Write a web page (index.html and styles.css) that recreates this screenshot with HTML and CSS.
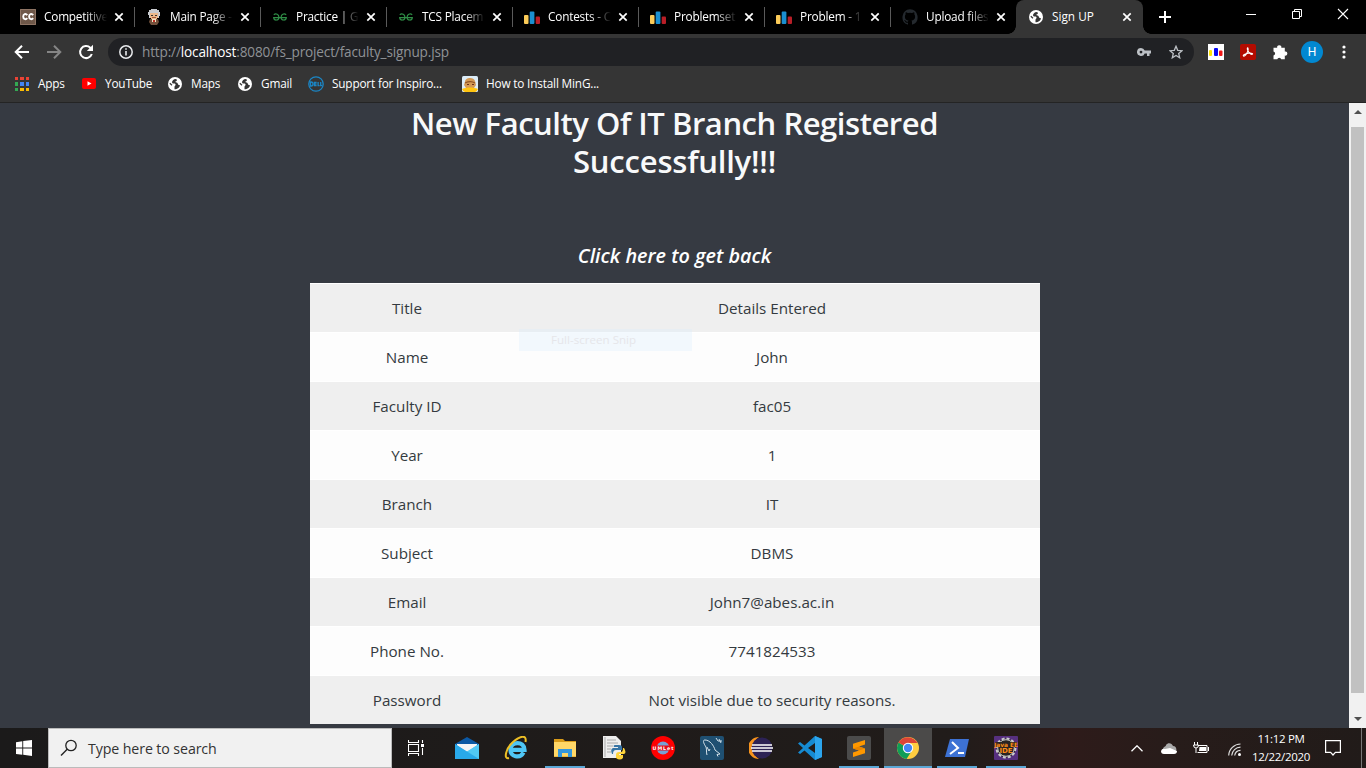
FILE: index.html
```html
<!DOCTYPE html>
<html lang="en">
<head>
<meta charset="utf-8">
<title>Sign UP</title>
<link rel="stylesheet" href="styles.css">
</head>
<body>
<svg class="defs" aria-hidden="true">
  <symbol id="globe" viewBox="0 0 14 14"><circle cx="7" cy="7" r="7" fill="#fff"/><path d="M7.500 2C5.800 2.200 4.300 3.400 4 5c0 1 .8 1.500 2 1.500 1.300 0 1.700.6 1.500 1.500-.2.800-1 .9-1 2v2.300c3 0 5.400-1.800 5.400-4.300-1 .4-1.700-.2-2-1C9.600 6 9 5.500 7.800 5.300c-.8-.2-.6-1 .3-1.100.8-.1.800-.8.700-1.800z" fill="#353535"/><path d="M1.800 6.200 4 8.200" stroke="#353535" stroke-width="1.200"/></symbol>
  <symbol id="close" viewBox="0 0 10 10"><path d="M1.3 1.3l7.4 7.4M8.7 1.3 1.3 8.7" stroke="#fff" stroke-width="1.7"/></symbol>
  <symbol id="bars" viewBox="0 0 16 16"><rect x="0" y="6" width="4.5" height="9" rx="1" fill="#fbcb58"/><rect x="5.7" y="2.500" width="4.7" height="12.5" rx="1" fill="#1a8fd0"/><rect x="11.7" y="7.500" width="4.3" height="7.5" rx="1" fill="#b81e27"/></symbol>
  <symbol id="gfg" viewBox="0 0 16 16"><path d="M1.800 5.700C4 4 6.900 5.500 6.900 8.200c0 3.800-5 3.600-5.200.4H14.300c-.2 3.200-5.200 3.400-5.200-.4 0-2.700 2.900-4.200 5.100-2.500" fill="none" stroke="#2f8d46" stroke-width="1.200"/></symbol>
</svg>

<header class="tabstrip">
  <div class="tab"><svg class="fav" viewBox="0 0 16 16"><rect width="16" height="16" fill="#6f5849"/><path d="M.5.5h15v15H.5z" fill="none" stroke="#8e7464"/><path d="M7.3 6.1C5.7 4 3.2 5 3.2 7.5s2.4 3.6 4.1 1.7M13.2 6.1C11.6 4 9.1 5 9.1 7.5s2.4 3.6 4.1 1.7" fill="none" stroke="#fff" stroke-width="1.9"/></svg><span class="name">Competitive</span><svg class="x"><use href="#close"/></svg></div>
  <div class="tab"><svg class="fav" viewBox="0 0 16 16"><path d="M2 3h1V1h2V0h6v1h2v2h1v4h-1v2H3V6H2z" fill="#c9cbcf"/><path d="M4 4h8v5h-1v1H5V9H4z" fill="#edb98b"/><path d="M5 6h2v1H5zM9 6h2v1H9z" fill="#333"/><path d="M6 8h4v1H6z" fill="#a65a3b"/><path d="M4 10h8l1 3-2 3H5l-2-3z" fill="#72513c"/><path d="M6 10h4v3H6z" fill="#f3e4c4"/><path d="M7 11h2v2H7z" fill="#c12c21"/></svg><span class="name">Main Page -</span><svg class="x"><use href="#close"/></svg></div>
  <div class="tab"><svg class="fav"><use href="#gfg"/></svg><span class="name">Practice | Ge</span><svg class="x"><use href="#close"/></svg></div>
  <div class="tab"><svg class="fav"><use href="#gfg"/></svg><span class="name">TCS Placem</span><svg class="x"><use href="#close"/></svg></div>
  <div class="tab"><svg class="fav"><use href="#bars"/></svg><span class="name">Contests - C</span><svg class="x"><use href="#close"/></svg></div>
  <div class="tab"><svg class="fav"><use href="#bars"/></svg><span class="name">Problemset</span><svg class="x"><use href="#close"/></svg></div>
  <div class="tab"><svg class="fav"><use href="#bars"/></svg><span class="name">Problem - 1</span><svg class="x"><use href="#close"/></svg></div>
  <div class="tab last"><svg class="fav" viewBox="0 0 16 16"><path d="M8 .2A8 8 0 0 0 5.5 15.600c.4.1.5-.2.5-.4v-1.500c-2.200.5-2.700-1-2.700-1-.4-.9-.9-1.200-.9-1.200-.7-.5.1-.5.1-.5.8.1 1.200.8 1.200.8.7 1.300 1.900.9 2.300.7.1-.5.3-.9.5-1.100-1.800-.2-3.600-.9-3.600-4 0-.9.3-1.600.8-2.100-.1-.2-.4-1 .1-2.100 0 0 .7-.2 2.200.8a7.500 7.500 0 0 1 4 0c1.500-1 2.200-.8 2.200-.8.4 1.100.2 1.900.1 2.100.5.5.8 1.200.8 2.100 0 3.100-1.900 3.800-3.700 4 .3.300.6.8.6 1.500v2.300c0 .2.100.5.600.4A8 8 0 0 0 8 .2z" fill="#24292e"/></svg><span class="name">Upload files</span><svg class="x"><use href="#close"/></svg></div>
  <div class="tab active"><svg class="fav globe"><use href="#globe"/></svg><span class="name">Sign UP</span><svg class="x"><use href="#close"/></svg></div>
  <svg class="newtab" viewBox="0 0 12 12"><path d="M6 0v12M0 6h12" stroke="#fff" stroke-width="2"/></svg>
  <div class="winbtns">
    <svg viewBox="0 0 12 12"><path d="M1 6.500h10" stroke="#fff"/></svg>
    <svg viewBox="0 0 12 12"><path d="M1.500 3.500h7v7h-7zM3.500 3V1.500h7v7H9" fill="none" stroke="#fff"/></svg>
    <svg viewBox="0 0 12 12"><path d="M1 1l10 10M11 1 1 11" stroke="#fff" stroke-width="1.100"/></svg>
  </div>
</header>

<nav class="toolbar">
  <svg class="nav" viewBox="0 0 16 16"><path d="M15 8H2M8 1.700 1.700 8 8 14.300" fill="none" stroke="#fff" stroke-width="2"/></svg>
  <svg class="nav" viewBox="0 0 16 16"><path d="M1 8h13M8 1.700 14.300 8 8 14.300" fill="none" stroke="#858585" stroke-width="2"/></svg>
  <svg class="nav" viewBox="0 0 16 16"><path d="M13.800 10A6 6 0 1 1 12.300 3.800L14 5.500" fill="none" stroke="#fff" stroke-width="2"/><path d="M15 .8v6.200H8.800z" fill="#fff"/></svg>
  <div class="omnibox">
    <svg class="info" viewBox="0 0 14 14"><circle cx="7" cy="7" r="6.200" fill="none" stroke="#e8eaed" stroke-width="1.500"/><path d="M7 6v4.500M7 3.200v1.600" stroke="#e8eaed" stroke-width="1.600"/></svg>
    <span class="url">http://<b>localhost</b>:8080/fs_project/faculty_signup.jsp</span>
    <svg class="key" viewBox="0 0 14 9"><path d="M4 0a4 4 0 1 0 3.700 5.500H10V8h2.500V5.500H14v-3H7.700A4 4 0 0 0 4 0zm0 2.700a1.400 1.400 0 1 1 0 2.800 1.400 1.400 0 0 1 0-2.800z" fill="#bdc1c6" fill-rule="evenodd"/></svg>
    <svg class="star" viewBox="0 0 14 14"><path d="M7 1.300l1.700 4 4.300.4-3.300 2.800 1 4.300L7 10.500l-3.700 2.300 1-4.300L1 5.700l4.300-.4z" fill="none" stroke="#bdc1c6" stroke-width="1.300"/></svg>
  </div>
  <div class="ext">
    <svg viewBox="0 0 16 16"><path d="M0 0h16v16H0z" fill="#fff"/><rect x="1" y="6" width="3" height="6" rx="1" fill="#ffe500"/><rect x="6" y="4" width="4" height="8" rx="1" fill="#0808f5"/><rect x="11" y="6.500" width="3.500" height="5.500" rx="1" fill="#f01818"/></svg>
    <svg viewBox="0 0 16 16"><rect width="16" height="16" rx="2" fill="#b30b00"/><path d="M3.500 12C2.500 11.200 5 9.800 8.500 9.300c3.500-.5 4.800.5 3.800 1-1.800.7-5.600-4-5-6.100.5-1.100 1.200.6.7 2.500-.7 2.400-3.200 6.100-4.500 5.300z" fill="none" stroke="#fff" stroke-width="1.100"/></svg>
    <svg viewBox="0 0 16 16"><path d="M1.500 3.800h3.700a2.100 2.100 0 1 1 4.100 0h3.500v3.700a2.100 2.100 0 1 1 0 4.100v3.600H9.200a2 2 0 0 0-3.900 0H1.500v-3.600a2.100 2.100 0 0 0 0-4.100z" fill="#fff"/></svg>
  </div>
  <span class="avatar">H</span>
  <svg class="more" viewBox="0 0 4 14"><circle cx="2" cy="2" r="1.600" fill="#fff"/><circle cx="2" cy="7" r="1.600" fill="#fff"/><circle cx="2" cy="12" r="1.600" fill="#fff"/></svg>
</nav>

<nav class="bookmarks">
  <span class="bm apps"><svg viewBox="0 0 14 14" width="14" height="14"><path d="M0 0h3v3H0zM5 0h4v3H5zM11 0h3v3h-3z" fill="#ea4335"/><path d="M0 5h3v4H0zM0 11h3v3H0z" fill="#34a853"/><path d="M5 5h4v4H5zM11 5h3v4h-3z" fill="#4285f4"/><path d="M5 11h4v3H5zM11 11h3v3h-3z" fill="#fbbc04"/></svg><span>Apps</span></span>
  <span class="bm yt"><svg viewBox="0 0 14 11" width="14" height="11"><rect width="14" height="11" rx="2" fill="#f00"/><path d="M5.500 3.200v4.600l4-2.300z" fill="#fff"/></svg><span>YouTube</span></span>
  <span class="bm maps"><svg width="14" height="14"><use href="#globe"/></svg><span>Maps</span></span>
  <span class="bm gmail"><svg width="14" height="14"><use href="#globe"/></svg><span>Gmail</span></span>
  <span class="bm dell"><svg viewBox="0 0 16 16" width="16" height="16"><circle cx="8" cy="8" r="7.200" fill="none" stroke="#1b86c5" stroke-width="1.300"/><path d="M2.500 6v4h.700Q5 10 5 8T3.200 6zM8.600 6.300H6.500v3.400h2.100M6.500 8h2M10.100 6v3.700h1.500M12.700 6v3.700h1.500" fill="none" stroke="#1b86c5" stroke-width="1.300"/></svg><span>Support for Inspiro...</span></span>
  <span class="bm ming"><svg viewBox="0 0 16 16" width="16" height="16"><rect width="16" height="16" rx="1.500" fill="#dcecf8"/><path d="M3 6c0-5 9-5 10-1l1 4-2 3H4L2 9z" fill="#d49a55"/><path d="M3 7c4-2 7-2 10 0" fill="none" stroke="#905326" stroke-width="1.200"/><path d="M5 8h2v1H5zM10 8h2v1h-2z" fill="#682f1d"/><path d="M0 13c5-2 11-2 16 0-1 2-2 3-3 3H3q-2 0-3-3z" fill="#ffc410"/></svg><span>How to Install MinG...</span></span>
</nav>

<div class="viewport">
  <main class="page">
    <h1>New Faculty Of IT Branch Registered <span>Successfully!!!</span></h1>
    <a class="back">Click here to get back</a>
    <table class="details">
      <tr><td>Title</td><td>Details Entered</td></tr>
      <tr><td>Name</td><td>John</td></tr>
      <tr><td>Faculty ID</td><td>fac05</td></tr>
      <tr><td>Year</td><td>1</td></tr>
      <tr><td>Branch</td><td>IT</td></tr>
      <tr><td>Subject</td><td>DBMS</td></tr>
      <tr><td>Email</td><td>John7@abes.ac.in</td></tr>
      <tr><td>Phone No.</td><td>7741824533</td></tr>
      <tr><td>Password</td><td>Not visible due to security reasons.</td></tr>
    </table>
    <div class="snip">Full-screen Snip</div>
  </main>
  <div class="scrollbar">
    <svg viewBox="0 0 8 4"><path d="M0 4 4 0l4 4z" fill="#505050"/></svg>
    <div class="thumb"></div>
    <svg viewBox="0 0 8 4"><path d="M0 0l4 4 4-4z" fill="#505050"/></svg>
  </div>
</div>

<footer class="taskbar">
  <div class="start"><svg viewBox="0 0 16 16" width="16" height="16"><path d="M0 2.200 6.300 1.200v6.300H0zM7.200 1.100 16 0v7.500H7.200zM0 8.400h6.300v6.400L0 13.900zM7.200 8.400H16V16l-8.800-1.200z" fill="#fff"/></svg></div>
  <div class="search"><svg viewBox="0 0 18 18" width="18" height="18"><circle cx="11" cy="6.500" r="5.200" fill="none" stroke="#222" stroke-width="1.300"/><path d="M7.200 10.300 1 16.500" stroke="#222" stroke-width="1.400"/></svg><span>Type here to search</span></div>
  <div class="taskview"><svg viewBox="0 0 16 16" width="16" height="16"><path d="M.5 0v2.500h10V0M.5 16v-2.500h10V16M.5 4.500h10v7H.5zM14.500 0v3M14.500 8v7" fill="none" stroke="#fff" stroke-width="1.100"/><path d="M13 4h3v3h-3z" fill="#fff"/></svg></div>
  <div class="apps-row">
    <div class="app"><svg viewBox="0 0 24 24"><path d="M0 8 12 1l12 7v5H0z" fill="#0c59a4"/><path d="M2 8h20v8H2z" fill="#f5f5f5"/><path d="M0 8l12 8L24 8v15H0z" fill="#29a9ea"/><path d="M0 23 24 8v15z" fill="#50c8f4"/><path d="M0 8l24 15H0z" fill="#29a9ea"/></svg></div>
    <div class="app"><svg viewBox="0 0 24 24"><path d="M19.500 16.500c-3.500 6.500-13.500 4.500-13-3.500.6-7.500 13.600-8.500 14 .8H8" fill="none" stroke="#4fc6f5" stroke-width="4.200"/><path d="M5 22C-1 24 2 12 9 6S23-2 21.500 6" fill="none" stroke="#edbf25" stroke-width="2"/></svg></div>
    <div class="app open"><svg viewBox="0 0 24 24"><path d="M1 3h9l2 2h11v16H1z" fill="#d99b19"/><path d="M1 6h22v14.500H1z" fill="#ffd767"/><path d="M5 21v-8h14v8h-4v-4H9v4z" fill="#3497dc"/></svg></div>
    <div class="app"><svg viewBox="0 0 24 24"><path d="M1 0h13l5 5v17H1z" fill="#eee"/><path d="M3 1v20M5 4h9M5 7h11M5 10h6M5 13h4M5 16h4" stroke="#aaa" stroke-width="1"/><path d="M13 9h4q3 0 3 2v3h-6q-3 0-3 4h-1q-2-5 1-6h5v-1h-4q-1-2 1-2z" fill="#3674a5"/><path d="M21 12h1q3 5 0 6h-5v1h4v3q-3 3-7 0v-3q0-3 3-3h2q2 0 2-4z" fill="#ffd43b"/></svg></div>
    <div class="app"><svg viewBox="0 0 24 24"><circle cx="12" cy="12" r="12" fill="#f00"/><circle cx="12" cy="12" r="6.500" fill="#78a0d4"/><path d="M3 9.500h18v5H3z" fill="#e60b16"/><text x="12.500" y="13.800" class="uml">UMLet</text></svg></div>
    <div class="app"><svg viewBox="0 0 24 24"><rect width="24" height="24" rx="2" fill="#1f5072"/><path d="M7 19C6 16 7 14 6 11 4 8 2 4 5 4c5 0 9 6 10 10l5 4-3 .5 1 2M7 11l2 4 1-2M16 2l2 3h4M19 3l2 4" fill="none" stroke="#d3e1e9" stroke-width="1"/></svg></div>
    <div class="app"><svg viewBox="0 0 24 24"><path d="M10 1A11 11 0 0 0 10 23 13 13 0 0 1 10 1z" fill="#f7941e"/><circle cx="13" cy="12" r="10.500" fill="#2c2255"/><path d="M3 9h20M2 12h22M3 15h20" stroke="#fff" stroke-width="1.600"/></svg></div>
    <div class="app"><svg viewBox="0 0 24 24"><path d="M17 0l7 3v18l-7 3L6.500 14.500 2 18l-2-1.500L5 12 0 7.500 2 6l4.500 3.500zM17 7l-7 5 7 5z" fill="#168bd2" fill-rule="evenodd"/><path d="M17 0l7 3v18l-7 3z" fill="#2ca5ed"/></svg></div>
    <div class="app open"><svg viewBox="0 0 24 24"><rect width="24" height="24" rx="2" fill="#4b4b4b"/><path d="M18 4v4.500l-6 2 6 2v4.800L6 21v-4.500l6-2-6-2V7.700z" fill="#ff9800"/><path d="M6 12.500l6-2 6 2-6 2z" fill="#e98500"/></svg></div>
    <div class="app open current"><svg viewBox="0 0 24 24"><circle cx="12" cy="12" r="11" fill="#ffcd40"/><path d="M12 12 2.500 6.500a11 11 0 0 0 8 16.400L16 14.500z" fill="#0f9d58"/><path d="M12 12 2.500 6.500A11 11 0 0 1 21.500 7H12z" fill="#db4437"/><circle cx="12" cy="12" r="5.200" fill="#fff"/><circle cx="12" cy="12" r="4.200" fill="#4285f4"/></svg></div>
    <div class="app open"><svg viewBox="0 0 24 24"><path d="M5 3h19l-4 18H0z" fill="#3d72d4"/><path d="M7 6l6 6-8 6M13 17h6" fill="none" stroke="#fff" stroke-width="2"/></svg></div>
    <div class="app open"><svg viewBox="0 0 24 24"><rect width="24" height="24" rx="1" fill="#573080"/><circle cx="12" cy="12" r="9.500" fill="#292423" stroke="#ccc" stroke-width="2" stroke-dasharray="3 2"/><circle cx="12" cy="12" r="8.300" fill="none" stroke="#ccc"/><path d="M1 6h22v5H1z" fill="#292423"/><text x="12" y="10.500" class="jee">Java EE</text><text x="12" y="17" class="jee ide">IDE</text></svg></div>
  </div>
  <div class="tray">
    <svg viewBox="0 0 12 7" width="12" height="7"><path d="M.5 6.300 6 .8l5.500 5.500" fill="none" stroke="#fff" stroke-width="1.300"/></svg>
    <svg class="cloud" viewBox="0 0 16 11" width="16" height="11"><path d="M2 7C2 3 5 4 5 2c2-3 6-2 7 1 3 0 4 3 3 5z" fill="#aaa"/><path d="M0 8q1-3 4-2l5-1 7 3q0 3-3 3H3Q0 11 0 8z" fill="#fff"/></svg>
    <svg class="battery" viewBox="0 0 16 12" width="16" height="12"><path d="M5 3.500h9v7H4.500M15.500 5v4M1.500 0v3M4.500 0v3M.5 3h5q0 3-2.500 3T.5 3M3 6v5" fill="none" stroke="#fff"/><path d="M6.500 5H13v4H6z" fill="#fff"/></svg>
    <svg class="wifi" viewBox="0 0 13 13" width="13" height="13"><circle cx="11.500" cy="11.500" r="1.500" fill="#fff"/><path d="M.7 12.500A12 12 0 0 1 12.500 1M3.700 12.500a9 9 0 0 1 8.800-8.300M6.700 12.500a6 6 0 0 1 5.800-5.200" fill="none" stroke="#ddd" stroke-width="1.200"/></svg>
    <div class="clock"><span>11:12 PM</span><span>12/22/2020</span></div>
    <svg class="note" viewBox="0 0 16 16" width="16" height="16"><path d="M.6.600h14.800v11.800h-5L8 15l-2.400-2.600h-5z" fill="none" stroke="#fff" stroke-width="1.200"/></svg>
    <i class="peek"></i>
  </div>
</footer>
</body>
</html>
```
FILE: styles.css
```css
* { box-sizing: border-box; }
body { margin: 0; width: 1366px; height: 768px; overflow: hidden; display: flex; flex-direction: column; background: #363a42; font-family: "Open Sans", "Noto Sans", sans-serif; font-size: 12px; color: #fff; }
svg { display: block; flex: none; }
.defs { width: 0; height: 0; position: absolute; }

/* Tabs */
.tabstrip { height: 34px; flex: none; display: flex; align-items: center; background: #000; padding-left: 8px; }
.tab { width: 126px; height: 34px; display: flex; align-items: center; padding-left: 12px; }
.tab + .tab:not(.active) { background: linear-gradient(#5a5a5a, #5a5a5a) 0 7px / 1px 20px no-repeat; }
.tab .fav { width: 16px; height: 16px; }
.tab .name { width: 70px; margin: -1px -7px 1px 8px; white-space: nowrap; font-size: 11.8px; letter-spacing: -.2px; line-height: 20px; -webkit-mask-image: linear-gradient(90deg, #000 60%, transparent 90%); mask-image: linear-gradient(90deg, #000 60%, transparent 90%); }
.tab .x { width: 10px; height: 10px; margin-left: 7px; }
.tab.active { width: 127px; background: #353535; border-radius: 8px 8px 0 0; position: relative; }
.tab.active::before, .tab.active::after { content: ""; position: absolute; bottom: 0; width: 8px; height: 8px; }
.tab.active::before { left: -8px; background: radial-gradient(circle at 0 0, transparent 7.5px, #353535 8px); }
.tab.active::after { right: -8px; background: radial-gradient(circle at 100% 0, transparent 7.5px, #353535 8px); }
.tab.active .globe { width: 14px; height: 14px; margin: 0 1px; }
.tab.active .name { -webkit-mask-image: none; mask-image: none; letter-spacing: 0; }
.newtab { width: 12px; height: 12px; margin-left: 16px; }
.winbtns { margin: -6px 17px 0 auto; display: flex; gap: 34px; }
.winbtns svg { width: 12px; height: 12px; }

/* Toolbar */
.toolbar { height: 36px; flex: none; background: #353535; display: flex; align-items: center; padding-left: 14px; }
.nav { width: 16px; height: 16px; margin-right: 16px; }
.omnibox { width: 1086px; height: 28px; margin-left: -2px; border-radius: 14px; background: #202124; display: flex; align-items: center; padding: 0 11px; }
.info { width: 14px; height: 14px; }
.url { margin-left: 9px; font-size: 13.6px; letter-spacing: -.16px; color: #8f9296; line-height: 24px; }
.url b { font-weight: 400; color: #fff; }
.key { width: 14px; height: 9px; margin-left: auto; }
.star { width: 14px; height: 14px; margin-left: 18px; }
.ext { display: flex; gap: 16px; margin-left: 14px; }
.ext svg { width: 16px; height: 16px; }
.avatar { width: 22px; height: 22px; margin-left: 13px; border-radius: 50%; background: #0288d1; font: 12px/22px Roboto, sans-serif; text-align: center; }
.more { width: 4px; height: 14px; margin-left: 19px; }

/* Bookmarks */
.bookmarks { height: 33px; flex: none; background: #353535; border-bottom: 1px solid #242424; display: flex; align-items: center; padding: 0 0 5px 15px; font-size: 11.8px; letter-spacing: -.18px; }
.bm { display: flex; align-items: center; gap: 9px; white-space: nowrap; }
.bm span { margin: -1px 0 1px; }
.apps { width: 67px; }
.yt { width: 86px; }
.maps { width: 70px; }
.gmail { width: 70px; }
.dell { width: 154px; gap: 8px; }
.ming { gap: 8px; }

/* Page */
.viewport { height: 625px; flex: none; display: flex; overflow: hidden; }
.page { width: 1349px; display: flex; flex-direction: column; align-items: center; position: relative; background: #363a42; }
h1 { width: 540px; margin: 1px 0 0; text-align: center; font-size: 31px; line-height: 38px; font-weight: 600; color: #f8f9fa; letter-spacing: -.46px; }
h1 span { letter-spacing: -.2px; }
.back { margin-top: 62px; font-size: 19.8px; line-height: 28px; font-weight: 600; font-style: italic; }
.details { width: 730px; margin-top: 13px; border-spacing: 0; table-layout: fixed; font-size: 15.2px; color: #343a40; text-align: center; }
.details tr { background: #fdfdfd; }
.details tr:nth-child(odd) { background: #efefef; }
.details td { height: 49px; padding: 0 0 1px 1px; border-top: 1px solid #fff; line-height: 24px; }
.details td:first-child { width: 194px; }
.snip { position: absolute; left: 519px; top: 226px; width: 173px; height: 22px; padding-left: 32px; background: rgba(222, 239, 252, .35); color: #e6e6ea; font-size: 11.6px; line-height: 22px; }
.scrollbar { width: 17px; background: #f1f1f1; display: flex; flex-direction: column; align-items: center; padding: 7px 0; }
.scrollbar svg { width: 8px; height: 4px; }
.thumb { width: 13px; height: 566px; margin: 13px 0 24px; background: #c1c1c1; }

/* Taskbar */
.taskbar { height: 40px; flex: none; display: flex; background: linear-gradient(90deg, #1b1a1a 0, #211c1a 70%, #2e1b1a 78%, #271c1a 86%, #211b19 100%); }
.start, .taskview { width: 48px; display: grid; place-items: center; }
.search { width: 344px; background: #f1f1f1; border: 1px solid #bbb; display: flex; align-items: center; gap: 10px; padding-left: 11px; color: #333; font-size: 14.2px; letter-spacing: -.1px; }
.taskview { width: 51px; padding-right: 3px; }
.apps-row { display: flex; }
.app { width: 49px; height: 40px; display: flex; align-items: center; justify-content: center; padding-right: 1px; }
.app svg { width: 24px; height: 24px; }
.app.open { background: linear-gradient(#5ba7d6, #5ba7d6) 4px 38px / 40px 2px no-repeat; }
.app.current { background: linear-gradient(#5ba7d6, #5ba7d6) 0 38px / 48px 2px no-repeat, linear-gradient(#4b4a49, #4b4a49) 0 0 / 48px 40px no-repeat; }
.uml { font: 700 4.800px "DejaVu Sans", sans-serif; fill: #fff; text-anchor: middle; letter-spacing: .9px; }
.jee { font: 700 5.800px "DejaVu Sans", sans-serif; fill: #ff8c16; text-anchor: middle; }
.ide { font-size: 7px; }
.tray { flex: 1; display: flex; align-items: center; padding-left: 100px; }
.cloud { margin-left: 18px; }
.battery { margin-left: 16px; }
.wifi { margin-left: 19px; margin-top: 2px; }
.clock { width: 76px; margin-left: -2px; display: flex; flex-direction: column; align-items: center; font-size: 11.5px; line-height: 18px; letter-spacing: -.3px; padding: 0 0 1px 8px; }
.note { margin-left: 10px; }
.peek { width: 1px; height: 40px; margin: 0 4px 0 auto; background: #777; }
```
